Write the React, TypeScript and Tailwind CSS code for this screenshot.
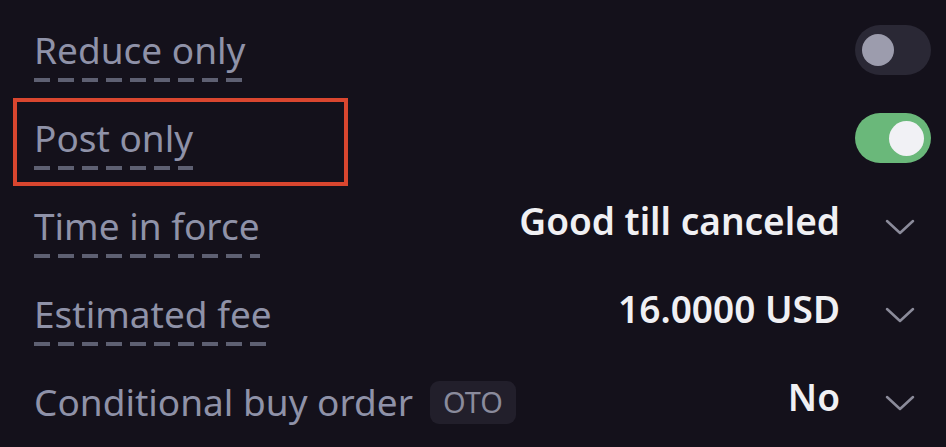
import React from "react";

const font = { fontFamily: '"Noto Sans", "Open Sans", sans-serif' };

function Label({ children }: { children: React.ReactNode }) {
  return (
    <div className="flex flex-col mt-[10px]">
      <span className="leading-[44px] text-[#8f92a8]">{children}</span>
      <div className="mt-[6px] h-[4px] w-full bg-[linear-gradient(to_right,#5e6072_16px,transparent_16px)] bg-[length:24px_4px] bg-repeat-x" />
    </div>
  );
}

function Toggle({ on }: { on: boolean }) {
  return on ? (
    <div className="w-[76px] h-[50px] rounded-full bg-[#6ab87a] flex items-center justify-end pr-[7px]">
      <div className="w-[35px] h-[35px] rounded-full bg-[#f1f1f5]" />
    </div>
  ) : (
    <div className="w-[76px] h-[50px] rounded-full bg-[#2a2835] flex items-center pl-[7px]">
      <div className="w-[32px] h-[32px] rounded-full bg-[#9c9cad]" />
    </div>
  );
}

function Chevron() {
  return (
    <svg width="30" height="16" viewBox="0 0 30 16" className="ml-[45px] mr-[16px] mt-[2px]">
      <polyline points="2,2 15,14 28,2" fill="none" stroke="#8b8b9a" strokeWidth="2.5" strokeLinecap="round" strokeLinejoin="round" />
    </svg>
  );
}

function Value({ children }: { children: React.ReactNode }) {
  return <span className="font-semibold text-[#f0f0f3] leading-[44px] mb-[11px]">{children}</span>;
}

export default function App() {
  return (
    <div style={font} className="w-[946px] h-[447px] bg-[#14111b] pl-[34px] pr-[15px] pt-[6px] text-[37px] overflow-hidden">
      <div className="h-[88px] flex items-center justify-between">
        <Label>Reduce only</Label>
        <Toggle on={false} />
      </div>
      <div className="relative h-[88px] flex items-center justify-between">
        <div className="absolute left-[-21px] top-[4px] w-[335px] h-[88px] border-[4px] border-[#d9462f]" />
        <Label>Post only</Label>
        <Toggle on={true} />
      </div>
      <div className="h-[88px] flex items-center justify-between">
        <Label>Time in force</Label>
        <div className="flex items-center">
          <Value>Good till canceled</Value>
          <Chevron />
        </div>
      </div>
      <div className="h-[88px] flex items-center justify-between">
        <Label>Estimated fee</Label>
        <div className="flex items-center">
          <Value>16.0000 USD</Value>
          <Chevron />
        </div>
      </div>
      <div className="h-[88px] flex items-center justify-between">
        <div className="flex items-center">
          <span className="text-[#8f92a8] leading-[44px]">Conditional buy order</span>
          <span className="ml-[17px] h-[43px] px-[13px] rounded-[9px] bg-[#221f2b] text-[#8a8b9c] text-[29px] flex items-center">OTO</span>
        </div>
        <div className="flex items-center">
          <Value>No</Value>
          <Chevron />
        </div>
      </div>
    </div>
  );
}
